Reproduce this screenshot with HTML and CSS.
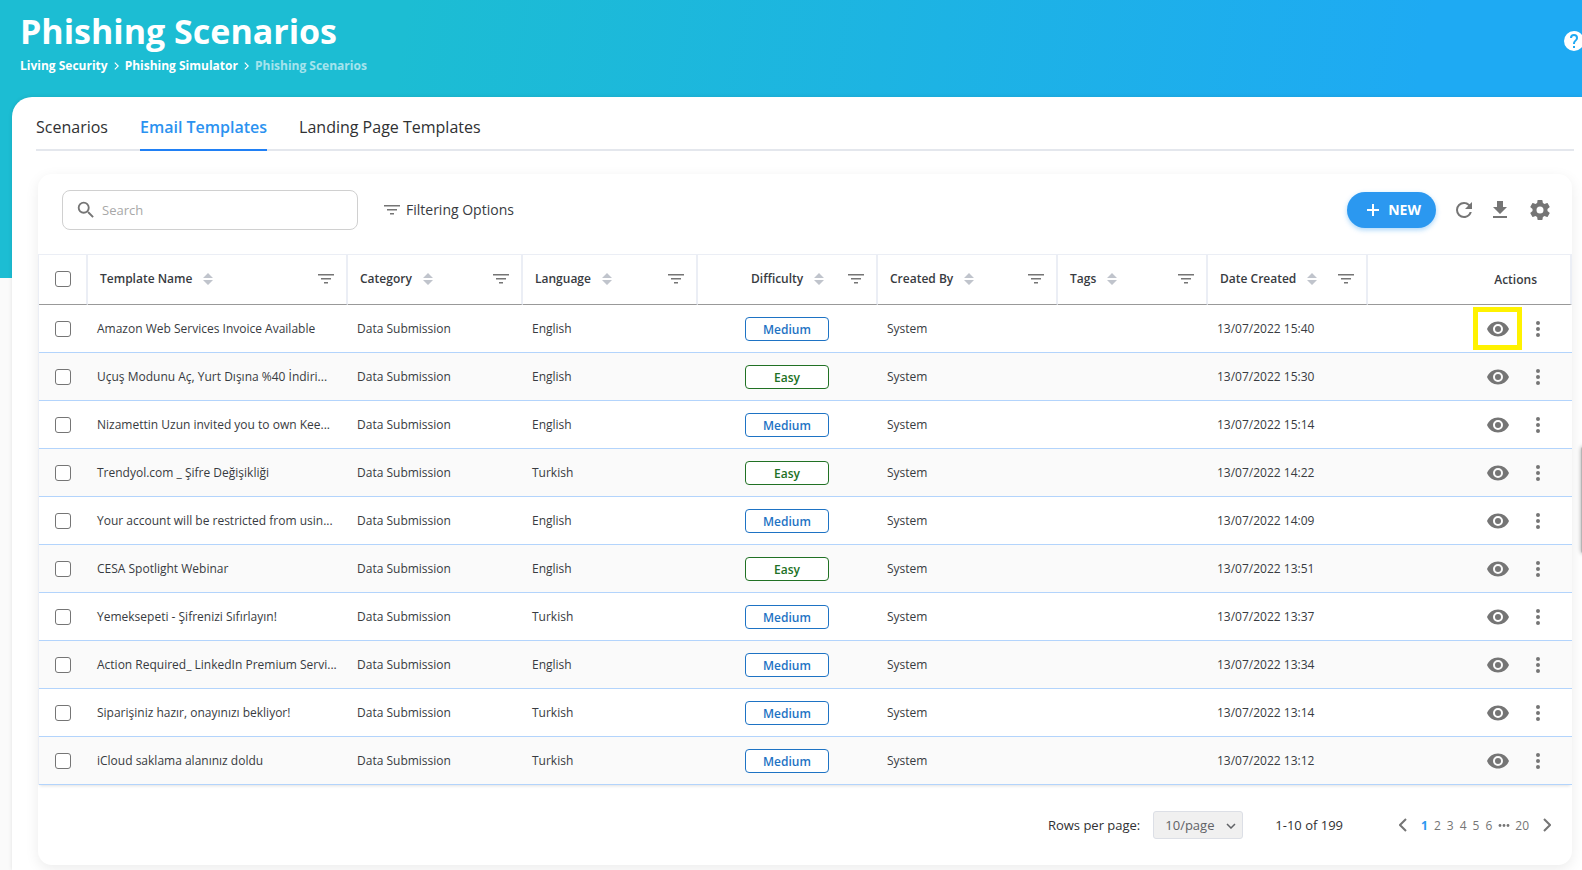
FILE: index.html
```html
<!DOCTYPE html>
<html lang="en">
<head>
    <meta charset="UTF-8">
    <meta name="viewport" content="width=device-width, initial-scale=1.0">
    <title>Phishing Scenarios</title>
    <link rel="stylesheet" href="styles.css">
</head>
<body>
    <!-- Shared icons -->
    <svg class="icon-defs" aria-hidden="true">
        <symbol id="i-filter" viewBox="0 0 16 12"><path d="M0 1h16v1.500H0zM3 5h10v1.500H3zM6 9h4v1.500H6z"/></symbol>
        <symbol id="i-sort" viewBox="0 0 10 12"><path d="M5 0l5 5H0zM5 12l5-5H0z"/></symbol>
        <symbol id="i-eye" viewBox="0 0 24 24"><path d="M12 9a3 3 0 0 0-3 3 3 3 0 0 0 3 3 3 3 0 0 0 3-3 3 3 0 0 0-3-3m0 8a5 5 0 0 1-5-5 5 5 0 0 1 5-5 5 5 0 0 1 5 5 5 5 0 0 1-5 5m0-12.500C7 4.500 2.730 7.610 1 12c1.730 4.390 6 7.500 11 7.500s9.270-3.110 11-7.500c-1.730-4.390-6-7.500-11-7.500z"/></symbol>
        <symbol id="i-dots" viewBox="0 0 24 24"><path d="M12 16a2 2 0 0 1 2 2 2 2 0 0 1-2 2 2 2 0 0 1-2-2 2 2 0 0 1 2-2m0-6a2 2 0 0 1 2 2 2 2 0 0 1-2 2 2 2 0 0 1-2-2 2 2 0 0 1 2-2m0-6a2 2 0 0 1 2 2 2 2 0 0 1-2 2 2 2 0 0 1-2-2 2 2 0 0 1 2-2z"/></symbol>
        <symbol id="i-chevron" viewBox="0 0 8 14"><path d="M1 1l6 6-6 6" fill="none" stroke="currentColor" stroke-width="2"/></symbol>
    </svg>

    <header class="page-header">
        <div>
            <h1>Phishing Scenarios</h1>
            <nav class="breadcrumb" aria-label="Breadcrumb">
                <a href="#">Living Security</a>
                <svg class="crumb-arrow"><use href="#i-chevron"/></svg>
                <a href="#">Phishing Simulator</a>
                <svg class="crumb-arrow"><use href="#i-chevron"/></svg>
                <span class="current">Phishing Scenarios</span>
            </nav>
        </div>
        <button class="btn-help" aria-label="Help">
            <svg viewBox="2 2 20 20"><path d="M15.070 11.250l-.9.920C13.450 12.890 13 13.500 13 15h-2v-.5c0-1.110.45-2.110 1.170-2.830l1.240-1.260c.37-.36.590-.86.590-1.410a2 2 0 0 0-2-2 2 2 0 0 0-2 2H8a4 4 0 0 1 4-4 4 4 0 0 1 4 4 3.200 3.200 0 0 1-.93 2.250M13 19h-2v-2h2M12 2A10 10 0 0 0 2 12a10 10 0 0 0 10 10 10 10 0 0 0 10-10C22 6.470 17.500 2 12 2z"/></svg>
        </button>
    </header>

    <main class="panel">
        <nav class="tabs">
            <a href="#">Scenarios</a>
            <a href="#" class="active">Email Templates</a>
            <a href="#">Landing Page Templates</a>
        </nav>

        <section class="card">
            <div class="toolbar">
                <label class="search">
                    <svg viewBox="0 0 24 24"><path d="M15.500 14h-.79l-.28-.27A6.470 6.470 0 0 0 16 9.500 6.500 6.500 0 1 0 9.500 16c1.610 0 3.090-.59 4.230-1.570l.27.28v.79l5 4.990L20.490 19l-4.990-5zm-6 0C7.010 14 5 11.990 5 9.500S7.010 5 9.500 5 14 7.010 14 9.500 11.990 14 9.500 14z"/></svg>
                    <input type="text" id="searchInput" placeholder="Search" aria-label="Search">
                </label>
                <button class="btn-filtering"><svg class="icon-filter"><use href="#i-filter"/></svg>Filtering Options</button>

                <button class="btn-new">
                    <svg viewBox="0 0 12 12"><path d="M5 0h2v5h5v2H7v5H5V7H0V5h5z"/></svg>NEW
                </button>
                <button class="btn-icon" aria-label="Refresh"><svg viewBox="0 0 24 24"><path d="M17.650 6.350A7.958 7.958 0 0 0 12 4a8 8 0 0 0-8 8 8 8 0 0 0 8 8c3.730 0 6.840-2.550 7.730-6h-2.080A5.990 5.990 0 0 1 12 18a6 6 0 0 1-6-6 6 6 0 0 1 6-6c1.660 0 3.140.69 4.220 1.780L13 11h7V4l-2.350 2.350z"/></svg></button>
                <button class="btn-icon" aria-label="Download"><svg viewBox="0 0 24 24"><path d="M5 20h14v-2H5m14-9h-4V3H9v6H5l7 7 7-7z"/></svg></button>
                <button class="btn-icon btn-settings" aria-label="Settings"><svg viewBox="0 0 24 24"><path d="M12 15.500A3.500 3.500 0 0 1 8.500 12 3.500 3.500 0 0 1 12 8.500a3.500 3.500 0 0 1 3.500 3.500 3.500 3.500 0 0 1-3.500 3.500m7.430-2.530c.04-.32.070-.64.070-.97s-.03-.66-.07-1l2.110-1.630c.19-.15.240-.42.120-.64l-2-3.460c-.12-.22-.39-.31-.61-.22l-2.490 1c-.52-.39-1.060-.73-1.690-.98l-.37-2.650A.506.506 0 0 0 14 2h-4c-.25 0-.46.18-.5.420l-.37 2.650c-.63.250-1.170.59-1.690.98l-2.490-1c-.22-.09-.49 0-.61.220l-2 3.460c-.13.220-.07.490.12.640L4.570 11c-.04.340-.07.670-.07 1s.03.650.07.970l-2.110 1.660c-.19.150-.25.420-.12.640l2 3.460c.12.220.39.300.61.220l2.490-1.010c.52.400 1.060.74 1.690.99l.37 2.650c.04.240.25.420.5.420h4c.25 0 .46-.18.5-.42l.37-2.650c.63-.26 1.170-.59 1.690-.99l2.490 1.010c.22.080.49 0 .61-.22l2-3.460c.12-.22.070-.49-.12-.64l-2.110-1.660z"/></svg></button>
            </div>

            <table>
                <colgroup>
                    <col class="col-check">
                    <col class="col-name">
                    <col class="col-category">
                    <col class="col-language">
                    <col class="col-difficulty">
                    <col class="col-created">
                    <col class="col-tags">
                    <col class="col-date">
                    <col>
                </colgroup>
                <thead>
                    <tr id="headRow">
                        <th class="check"><input type="checkbox" aria-label="Select all"></th>
                    </tr>
                </thead>
                <tbody id="templateTable">
                    <!-- Rows are added by the script -->
                </tbody>
            </table>

            <footer class="pagination">
                <label for="pageSize">Rows per page:</label>
                <span class="select-wrap">
                    <select id="pageSize">
                        <option>10/page</option>
                        <option>25/page</option>
                        <option>50/page</option>
                    </select>
                    <svg viewBox="0 0 10 6"><path d="M1 1l4 4 4-4" fill="none" stroke="currentColor" stroke-width="1.500"/></svg>
                </span>
                <span class="range">1-10 of 199</span>
                <nav class="pages" aria-label="Pages">
                    <button class="prev" aria-label="Previous page"><svg><use href="#i-chevron"/></svg></button>
                    <a href="#" class="active">1</a>
                    <a href="#">2</a>
                    <a href="#">3</a>
                    <a href="#">4</a>
                    <a href="#">5</a>
                    <a href="#">6</a>
                    <svg class="more" viewBox="0 0 12 3"><circle cx="2" cy="1.500" r="1.400"/><circle cx="6" cy="1.500" r="1.400"/><circle cx="10" cy="1.500" r="1.400"/></svg>
                    <a href="#">20</a>
                    <button class="next" aria-label="Next page"><svg><use href="#i-chevron"/></svg></button>
                </nav>
            </footer>
        </section>
    </main>
    <div class="side-handle"></div>

    <script>
        const columns = ["Template Name", "Category", "Language", "Difficulty", "Created By", "Tags", "Date Created"];

        const templates = [
            { name: "Amazon Web Services Invoice Available", language: "English", difficulty: "Medium", date: "13/07/2022 15:40", marked: true },
            { name: "Uçuş Modunu Aç, Yurt Dışına %40 İndiri...", language: "English", difficulty: "Easy", date: "13/07/2022 15:30" },
            { name: "Nizamettin Uzun invited you to own Kee...", language: "English", difficulty: "Medium", date: "13/07/2022 15:14" },
            { name: "Trendyol.com _ Şifre Değişikliği", language: "Turkish", difficulty: "Easy", date: "13/07/2022 14:22" },
            { name: "Your account will be restricted from usin...", language: "English", difficulty: "Medium", date: "13/07/2022 14:09" },
            { name: "CESA Spotlight Webinar", language: "English", difficulty: "Easy", date: "13/07/2022 13:51" },
            { name: "Yemeksepeti - Şifrenizi Sıfırlayın!", language: "Turkish", difficulty: "Medium", date: "13/07/2022 13:37" },
            { name: "Action Required_ LinkedIn Premium Servi...", language: "English", difficulty: "Medium", date: "13/07/2022 13:34" },
            { name: "Siparişiniz hazır, onayınızı bekliyor!", language: "Turkish", difficulty: "Medium", date: "13/07/2022 13:14" },
            { name: "iCloud saklama alanınız doldu", language: "Turkish", difficulty: "Medium", date: "13/07/2022 13:12" }
        ];

        const headRow = document.getElementById("headRow");
        columns.forEach(title => {
            const th = document.createElement("th");
            th.className = title === "Difficulty" ? "centered" : "";
            th.innerHTML = `<div class="head-cell">
                <span class="head-title">${title}<svg class="icon-sort"><use href="#i-sort"/></svg></span>
                <button class="btn-filter" aria-label="Filter ${title}"><svg class="icon-filter"><use href="#i-filter"/></svg></button>
            </div>`;
            headRow.appendChild(th);
        });
        headRow.insertAdjacentHTML("beforeend", '<th class="actions-head">Actions</th>');

        const table = document.getElementById("templateTable");
        templates.forEach(t => {
            const row = table.insertRow();
            row.innerHTML = `
                <td class="check"><input type="checkbox" aria-label="Select ${t.name}"></td>
                <td>${t.name}</td>
                <td>Data Submission</td>
                <td>${t.language}</td>
                <td class="centered"><span class="badge ${t.difficulty.toLowerCase()}">${t.difficulty}</span></td>
                <td>System</td>
                <td></td>
                <td>${t.date}</td>
                <td><div class="actions">
                    <button class="btn-view ${t.marked ? "marked" : ""}" aria-label="Preview"><svg><use href="#i-eye"/></svg></button>
                    <button class="btn-more" aria-label="More"><svg><use href="#i-dots"/></svg></button>
                </div></td>`;
        });
    </script>
</body>
</html>
```
FILE: styles.css
```css
* {
    box-sizing: border-box;
}

body {
    margin: 0;
    min-height: 100vh;
    overflow: hidden;
    position: relative;
    font-family: "Open Sans", sans-serif;
    color: #383b41;
    background: linear-gradient(100deg, #1cbdd3 25%, #1eaaf3 88%) no-repeat #fafafa;
    background-size: 100% 278px;
}

button {
    padding: 0;
    border: none;
    background: none;
    font-family: inherit;
    color: #757575;
    cursor: pointer;
}

a {
    color: inherit;
    text-decoration: none;
}

svg {
    display: block;
    fill: currentColor;
}

.icon-defs {
    position: absolute;
    width: 0;
    height: 0;
}

/* Header */
.page-header {
    display: flex;
    justify-content: space-between;
    height: 97px;
    padding: 7px 0 0 20px;
    color: #fff;
}

h1 {
    margin: 0;
    font-size: 34px;
    line-height: 48px;
    font-weight: 700;
}

.breadcrumb {
    display: flex;
    align-items: center;
    font-size: 12px;
    line-height: 22px;
    font-weight: 700;
}

.breadcrumb .current {
    opacity: 0.6;
}

.crumb-arrow {
    width: 5px;
    height: 8px;
    margin: 0 6px;
}

.btn-help {
    align-self: flex-start;
    flex: none;
    margin: 24px -2px 0 0;
    color: #fff;
}

.btn-help svg {
    width: 20px;
    height: 20px;
}

/* Content */
.panel {
    min-height: calc(100vh - 97px);
    margin-left: 12px;
    padding: 12px 8px 5px 24px;
    background-color: #fff;
    border-radius: 20px 0 0 0;
    box-shadow: 0 0 4px rgba(0, 0, 0, 0.1);
}

.tabs {
    display: flex;
    gap: 32px;
    border-bottom: 2px solid #e4e7ed;
}

.tabs a {
    height: 42px;
    margin-bottom: -2px;
    font-size: 16px;
    line-height: 36px;
    color: #303133;
}

.tabs .active {
    color: #2b92f0;
    font-weight: 600;
    border-bottom: 2px solid #2080f5;
}

.card {
    margin: 23px 2px 0;
    border-radius: 14px;
    box-shadow: 0 4px 14px rgba(0, 0, 0, 0.08);
}

.toolbar {
    display: flex;
    align-items: center;
    height: 80px;
    padding: 0 20px 8px 24px;
}

.search {
    display: flex;
    align-items: center;
    width: 296px;
    height: 40px;
    padding: 0 12px;
    border: 1px solid #d0d0d0;
    border-radius: 8px;
    color: #757575;
}

.search svg {
    width: 22px;
    height: 22px;
    margin-right: 5px;
}

.search input {
    flex: 1;
    min-width: 0;
    padding: 0;
    border: none;
    outline: none;
    font-family: inherit;
    font-size: 13px;
}

.search input::placeholder {
    color: #a8a8a8;
}

.icon-filter {
    width: 16px;
    height: 12px;
}

.btn-filtering {
    display: flex;
    align-items: center;
    gap: 6px;
    margin: 0 auto 0 26px;
    font-size: 14px;
    line-height: 20px;
    color: #383b41;
}

.btn-filtering svg {
    color: #757575;
}

.btn-new {
    display: flex;
    align-items: center;
    gap: 9px;
    height: 36px;
    margin-right: 4px;
    padding: 0 15px 0 20px;
    border-radius: 18px;
    background-color: #2b98f0;
    color: #fff;
    font-size: 14px;
    line-height: 20px;
    font-weight: 700;
    box-shadow: 0 2px 5px rgba(43, 152, 240, 0.4);
}

.btn-new svg {
    width: 12px;
    height: 12px;
}

.btn-icon {
    margin-left: 12px;
}

.btn-settings {
    margin-left: 16px;
}

.btn-icon svg {
    width: 24px;
    height: 24px;
}

/* Table */
table {
    width: 100%;
    table-layout: fixed;
    border-collapse: separate;
    border-spacing: 0;
    border-left: 1px solid #ebeef5;
    box-shadow: 0 3px 3px -2px rgba(0, 0, 0, 0.12);
    font-size: 12px;
}

.col-check { width: 49px; }
.col-name { width: 260px; }
.col-category, .col-language { width: 175px; }
.col-difficulty, .col-created { width: 180px; }
.col-tags { width: 150px; }
.col-date { width: 160px; }

th {
    height: 51px;
    padding: 0 12px 2px;
    border-top: 1px solid #ebeef5;
    border-right: 2px solid #ebeef5;
    border-bottom: 1px solid #999;
    text-align: left;
    font-weight: 600;
}

td {
    height: 48px;
    padding: 0 0 0 9px;
    border-bottom: 1px solid #b3d4fc;
    white-space: nowrap;
}

tbody tr:nth-child(even) {
    background-color: #fafafa;
}

th.check {
    padding: 0 0 2px 16px;
}

td.check {
    padding: 0 0 0 16px;
}

input[type="checkbox"] {
    appearance: none;
    display: block;
    width: 16px;
    height: 16px;
    margin: 0;
    border: 1px solid #757575;
    border-radius: 3px;
    background-color: #fff;
}

.head-cell {
    display: flex;
    align-items: center;
    justify-content: space-between;
}

.head-title {
    display: flex;
    align-items: center;
    gap: 11px;
    white-space: nowrap;
}

th.centered .head-title {
    margin-left: 41px;
}

td.centered {
    padding: 0 2px 0 0;
    text-align: center;
}

.icon-sort {
    width: 10px;
    height: 12px;
    color: #c0c4cc;
}

th.actions-head {
    padding: 0 33px 0 0;
    text-align: right;
}

.badge {
    display: inline-block;
    width: 84px;
    padding-top: 2px;
    border: 1px solid;
    border-radius: 4px;
    background-color: #fff;
    font-weight: 600;
    line-height: 20px;
}

.badge.medium {
    color: #1e73c4;
}

.badge.easy {
    color: #217124;
}

.actions {
    display: flex;
    justify-content: flex-end;
    gap: 16px;
    padding-right: 22px;
}

.actions svg {
    width: 24px;
    height: 24px;
}

.btn-view {
    position: relative;
}

/* highlight frame over the preview button */
.btn-view.marked::after {
    content: "";
    position: absolute;
    inset: -10px -12px -9px -13px;
    border: 5px solid #fff200;
}

/* Pagination */
.pagination {
    display: flex;
    align-items: center;
    justify-content: flex-end;
    height: 80px;
    padding: 0 21px 0 0;
    font-size: 13px;
    color: #303133;
}

.select-wrap {
    position: relative;
    margin: 0 32px 0 13px;
    color: #606266;
}

.select-wrap select {
    appearance: none;
    display: block;
    width: 90px;
    height: 28px;
    padding: 0 11px;
    border: 1px solid #dcdfe6;
    border-radius: 3px;
    background-color: #f0f0f0;
    font-family: inherit;
    font-size: 13px;
    color: inherit;
}

/* arrow drawn over the select */
.select-wrap svg {
    position: absolute;
    top: 12px;
    right: 7px;
    width: 10px;
    height: 6px;
    pointer-events: none;
}

.pages {
    display: flex;
    align-items: center;
    gap: 6px;
    margin-left: 56px;
    font-size: 12px;
    color: #757575;
}

.pages .active {
    color: #2b98f0;
    font-weight: 700;
}

.pages button svg {
    width: 8px;
    height: 14px;
}

.pages .prev {
    margin-right: 8px;
    transform: scaleX(-1);
}

.pages .next {
    margin-left: 8px;
}

.pages .more {
    width: 12px;
    height: 3px;
    margin-right: -1px;
}

/* Drawer handle on the window edge */
.side-handle {
    position: absolute;
    top: 446px;
    right: -7px;
    width: 8px;
    height: 108px;
    border-radius: 4px;
    background-color: #b5b5b5;
    box-shadow: 0 0 4px rgba(0, 0, 0, 0.35);
}
```
